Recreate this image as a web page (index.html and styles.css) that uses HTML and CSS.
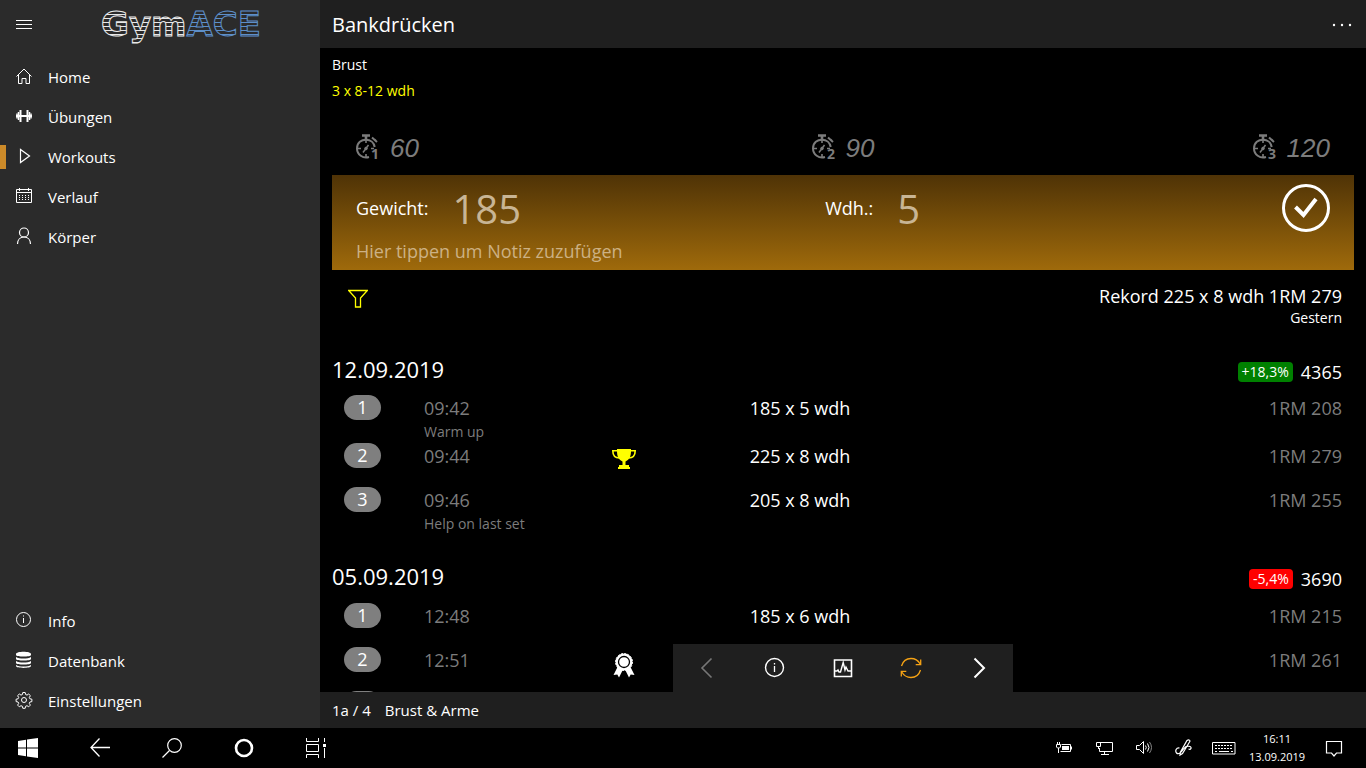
FILE: index.html
```html
<!DOCTYPE html>
<html lang="de">
<head>
    <meta charset="UTF-8">
    <meta name="viewport" content="width=device-width, initial-scale=1.0">
    <title>GymACE</title>
    <link rel="stylesheet" href="styles.css">
</head>
<body>
<div class="app">
    <aside class="sidebar">
        <div class="sidebar-head">
            <button class="icon-btn" aria-label="Menü">
                <svg width="24" height="24"><path d="M4 8.500h16M4 12.500h16M4 16.500h16" stroke="#fff"/></svg>
            </button>
            <svg class="logo" width="180" height="48" role="img" aria-label="GymACE">
                <defs>
                    <pattern id="bars-white" width="4" height="4" patternUnits="userSpaceOnUse"><path d="M0 2.500h4" stroke="#e8e8e8"/></pattern>
                    <pattern id="bars-blue" width="4" height="4" patternUnits="userSpaceOnUse"><path d="M0 2.500h4" stroke="#5d8fc9"/></pattern>
                </defs>
                <text x="1" y="36"><tspan fill="url(#bars-white)" stroke="#e8e8e8">Gym</tspan><tspan fill="url(#bars-blue)" stroke="#5d8fc9">ACE</tspan></text>
            </svg>
        </div>
        <nav class="menu">
            <a href="#" class="menu-item">
                <svg class="line" width="24" height="24"><path d="M4.500 11.500 12 4l7.500 7.500M6.500 10v8.500h3.500v-5h4v5h3.500V10"/></svg>
                Home
            </a>
            <a href="#" class="menu-item">
                <svg width="24" height="24" fill="none" stroke="#fff"><path d="M4 11h16" stroke-width="2"/><path d="M8.500 5v12M15.500 5v12" stroke-width="2"/><path d="M6.500 7v8M17.500 7v8" stroke-width="1.500"/><path d="M5 8.500v5M19 8.500v5" stroke-width="1.500"/></svg>
                Übungen
            </a>
            <a href="#" class="menu-item active">
                <svg class="line" width="24" height="24"><path d="M8.500 4.500v13l9-6.500z" stroke-width="1.200"/></svg>
                Workouts
            </a>
            <a href="#" class="menu-item">
                <svg class="line" width="24" height="24"><path d="M4.500 4.500h15v13h-15zM4.500 7.500h15M7.500 3v3M16.500 3v3"/><path d="M7 10.500h11M7 12.500h11M7 14.500h11" stroke-dasharray="1 2"/></svg>
                Verlauf
            </a>
            <a href="#" class="menu-item">
                <svg class="line" width="24" height="24"><circle cx="12" cy="7.500" r="4.500" stroke-width="1.200"/><path d="M5.500 19c0-4.500 3-7 6.500-7s6.500 2.500 6.500 7" stroke-width="1.200"/></svg>
                Körper
            </a>
        </nav>
        <nav class="menu menu-bottom">
            <a href="#" class="menu-item">
                <svg class="line" width="24" height="24"><circle cx="11.500" cy="10.500" r="7"/><path d="M11.500 9v5M11.500 6.500v1"/></svg>
                Info
            </a>
            <a href="#" class="menu-item">
                <svg width="24" height="24"><path d="M4 5c0-3 15-3 15 0v1c0 2-15 2-15 0zM4 8c3 2 12 2 15 0v2c0 2-15 2-15 0zM4 12c3 2 12 2 15 0v2c0 2-15 2-15 0zM4 16c3 2 12 2 15 0v1c0 2.500-15 2.500-15 0z" fill="#fff"/></svg>
                Datenbank
            </a>
            <a href="#" class="menu-item">
                <svg class="line" width="24" height="24"><circle cx="12" cy="11" r="2.500"/><path d="M10.800 3.500h2.400l.4 2 1.400.6 1.700-1.100 1.700 1.700-1.100 1.700.6 1.400 2 .4v2.400l-2 .4-.6 1.400 1.100 1.700-1.700 1.700-1.700-1.100-1.400.6-.4 2h-2.400l-.4-2-1.400-.6-1.700 1.100-1.700-1.700 1.100-1.700-.6-1.400-2-.4v-2.400l2-.4.6-1.400-1.100-1.700 1.700-1.700 1.700 1.100 1.400-.6z"/></svg>
                Einstellungen
            </a>
        </nav>
    </aside>

    <main class="main">
        <header class="topbar">
            <h1>Bankdrücken</h1>
            <button class="icon-btn" aria-label="Mehr">
                <svg width="24" height="24" fill="#fff"><circle cx="4" cy="13" r="1.200"/><circle cx="12" cy="13" r="1.200"/><circle cx="20" cy="13" r="1.200"/></svg>
            </button>
        </header>

        <div class="content">
            <p class="muscle">Brust</p>
            <p class="target">3 x 8-12 wdh</p>

            <div class="timers">
                <button class="timer">
                    <svg width="26" height="30"><use href="#watch"/><text x="15" y="26">1</text></svg>
                    60
                </button>
                <button class="timer">
                    <svg width="26" height="30"><use href="#watch"/><text x="15" y="26">2</text></svg>
                    90
                </button>
                <button class="timer">
                    <svg width="26" height="30"><use href="#watch"/><text x="15" y="26">3</text></svg>
                    120
                </button>
            </div>

            <form class="entry">
                <div class="entry-fields">
                    <div class="field">
                        <label for="weight">Gewicht:</label>
                        <input id="weight" type="text" value="185">
                    </div>
                    <div class="field">
                        <label for="reps">Wdh.:</label>
                        <input id="reps" type="text" value="5">
                    </div>
                    <button type="button" class="save" aria-label="Speichern">
                        <svg width="48" height="48" fill="none" stroke="#fff"><circle cx="24" cy="24" r="22.500" stroke-width="3"/><path d="M13.500 23l8 8L34 15" stroke-width="4"/></svg>
                    </button>
                </div>
                <input class="note-input" type="text" aria-label="Notiz" placeholder="Hier tippen um Notiz zuzufügen">
            </form>

            <div class="record">
                <button class="filter" aria-label="Filter">
                    <svg width="20" height="20" fill="none" stroke="#ff0" stroke-width="1.300"><path d="M.700 1.500h18.600l-6.800 7.500v9h-5V9z"/></svg>
                </button>
                <div class="record-text">
                    <p class="record-value">Rekord 225 x 8 wdh 1RM 279</p>
                    <p class="record-day">Gestern</p>
                </div>
            </div>

            <section>
                <div class="day">
                    <h2>12.09.2019</h2>
                    <span class="change up">+18,3%</span>
                    <span class="volume">4365</span>
                </div>
                <table class="sets">
                    <tr>
                        <td class="col-nr"><span class="nr">1</span></td>
                        <td class="col-time">09:42<small>Warm up</small></td>
                        <td class="col-award"></td>
                        <td class="col-reps">185 x 5 wdh</td>
                        <td class="col-rm">1RM 208</td>
                    </tr>
                    <tr>
                        <td><span class="nr">2</span></td>
                        <td class="col-time">09:44</td>
                        <td class="col-award">
                            <svg width="24" height="22" fill="#ff0"><path d="M5 1h14v2c0 6-2 9-5.500 10.500V17H17v2h1v2H6v-2h1v-2h3.500v-3.500C7 12 5 9 5 3z"/><path d="M6 2.800H.8c0 4.200 2 7.200 6.700 7.200M18 2.800h5.200c0 4.200-2 7.200-6.700 7.200" fill="none" stroke="#ff0" stroke-width="1.600"/></svg>
                        </td>
                        <td class="col-reps">225 x 8 wdh</td>
                        <td class="col-rm">1RM 279</td>
                    </tr>
                    <tr>
                        <td><span class="nr">3</span></td>
                        <td class="col-time">09:46<small>Help on last set</small></td>
                        <td></td>
                        <td class="col-reps">205 x 8 wdh</td>
                        <td class="col-rm">1RM 255</td>
                    </tr>
                </table>
            </section>

            <section>
                <div class="day">
                    <h2>05.09.2019</h2>
                    <span class="change down">-5,4%</span>
                    <span class="volume">3690</span>
                </div>
                <table class="sets">
                    <tr>
                        <td class="col-nr"><span class="nr">1</span></td>
                        <td class="col-time">12:48</td>
                        <td class="col-award"></td>
                        <td class="col-reps">185 x 6 wdh</td>
                        <td class="col-rm">1RM 215</td>
                    </tr>
                    <tr>
                        <td><span class="nr">2</span></td>
                        <td class="col-time">12:51</td>
                        <td class="col-award">
                            <svg width="22" height="26" fill="#fff"><path d="M5 14 .5 23l3.800-.5L6 25.500l4-8h2l4 8 1.700-3 3.800.5L17 14z"/><circle cx="11" cy="10" r="8.500"/><circle cx="11" cy="10" r="8.500" fill="none" stroke="#fff" stroke-dasharray="2 1.340"/><circle cx="11" cy="10" r="5.500" fill="none" stroke="#000" stroke-width="1.300"/></svg>
                        </td>
                        <td class="col-reps"></td>
                        <td class="col-rm">1RM 261</td>
                    </tr>
                    <tr>
                        <td><span class="nr"></span></td>
                        <td></td>
                        <td></td>
                        <td></td>
                        <td></td>
                    </tr>
                </table>
            </section>
        </div>

        <div class="commands">
            <button aria-label="Zurück" disabled>
                <svg width="24" height="24" fill="none" stroke="#777" stroke-width="1.600"><path d="M16.500 2.500 7 12l9.500 9.500"/></svg>
            </button>
            <button aria-label="Info">
                <svg class="line" width="24" height="24"><circle cx="11.500" cy="11.500" r="9" stroke-width="1.400"/><path d="M11.500 10v6M11.500 7v1.500" stroke-width="1.300"/></svg>
            </button>
            <button aria-label="Diagramm">
                <svg class="line" width="24" height="24"><path d="M3.500 4h17v16.500h-17z" stroke-width="1.600"/><path d="M4 15h2l1-1 1 2h1.500l2.700-9.500L14 14l1-3 2 4h3" stroke-width="1.400"/></svg>
            </button>
            <button aria-label="Wiederholen">
                <svg width="24" height="24" fill="none" stroke="#f5a214" stroke-width="1.300"><path d="M2.500 10C4 5 8 2.500 12 2.500c4 0 7.500 2.500 9.200 5.500M21.500 14c-1.500 5-5.500 7.500-9.500 7.500s-7.500-2.500-9.200-5.500M21.700 3.500v5.200h-5M2.300 20.500v-5.200h5"/></svg>
            </button>
            <button aria-label="Weiter">
                <svg width="24" height="24" fill="none" stroke="#fff" stroke-width="2"><path d="M7.500 2.500 17 12l-9.500 9.500"/></svg>
            </button>
        </div>

        <footer class="status">
            <span>1a / 4</span>
            <span>Brust &amp; Arme</span>
        </footer>
    </main>
</div>

<div class="taskbar">
    <div class="task-left">
        <button aria-label="Start"><svg width="20" height="20" fill="#fff"><path d="M0 3l8-1.200V9.500H0zM9 1.600 20 0v9.500H9zM0 10.500h8v7.700L0 17zM9 10.500h11V20L9 18.400z"/></svg></button>
        <button aria-label="Zurück"><svg class="line" width="20" height="20"><path d="M9.500.500 1 9.500l8.500 9M1 9.500h19" stroke-width="1.300"/></svg></button>
        <button aria-label="Suche"><svg class="line" width="20" height="20"><circle cx="12.500" cy="7.500" r="6.800" stroke-width="1.200"/><path d="M7.500 12.500.500 19.500" stroke-width="1.300"/></svg></button>
        <button aria-label="Cortana"><svg width="20" height="20" fill="none" stroke="#fff"><circle cx="10" cy="10" r="8" stroke-width="2.600"/></svg></button>
        <button aria-label="Aktive Anwendungen"><svg class="line" width="20" height="20"><path d="M.500 0v3.500h12V0M.500 20v-3.500h12V20M.500 6.500h12v7H.500zM18.500 0v4M18.500 10v10"/><path d="M17 6h3v3h-3z" fill="#fff" stroke="none"/></svg></button>
    </div>
    <div class="task-right">
        <button aria-label="Akku"><svg class="line" width="16" height="16"><path d="M5.500 4.500h9v7H4.500M15.500 6.500v3M2.500 8v5"/><path d="M6 6h7v4H6z" fill="#fff" stroke="none"/><path d="M1.500 2v3M3.500 2v3M.500 4.500h4V7l-1 1h-2l-1-1z"/></svg></button>
        <button aria-label="Netzwerk"><svg class="line" width="18" height="16"><path d="M5 2.500h12.500v9h-13V8M9.500 11.500v3M6 14.500h8M1.500 2.500h4v4h-4zM3.500 6.500V9"/></svg></button>
        <button aria-label="Lautsprecher"><svg class="line" width="18" height="16"><path d="M1.500 5.500h3l4-4v12l-4-4h-3zM10.500 5.500q1.500 2 0 4M12.500 3.500q3 4 0 8"/><path d="M14.500 2q4 5.500 0 11" stroke="#888"/></svg></button>
        <button aria-label="Windows Ink"><svg class="line" width="18" height="18"><path d="M12 1.500c2-1.500 3.500 0 2.500 1.500L7.500 14.500 5 16l.5-3zM4.500 9C1 8.500 0 12 1.500 14c2 2 5-1 7-4s5-3 6.500-2.500c2 .8 1 3.500-1.500 2.500" stroke-width="1.200"/></svg></button>
        <button aria-label="Tastatur"><svg class="line" width="24" height="14"><path d="M.500 1.500h22.500v11.500H.500z"/><path d="M3 4.500h18M3 7.500h18" stroke-dasharray="2 1"/><path d="M3 10.500h2M7 10.500h10M19 10.500h2"/></svg></button>
        <button class="clock"><span>16:11</span><span>13.09.2019</span></button>
        <button class="notices" aria-label="Benachrichtigungen"><svg class="line" width="18" height="18"><path d="M1.500 2.500h15v11.500h-5l-2.500 3-2.500-3h-5z" stroke-width="1.200"/></svg></button>
    </div>
</div>

<svg width="0" height="0" class="defs">
    <g id="watch" fill="none" stroke="#7c7c7c">
        <path d="M6 2.500h8M10 3v4" stroke-width="2.600"/>
        <path d="M16 4.500l5 4.500M18.500 8l1.500-1.500" stroke-width="2"/>
        <path d="M13 24C7 26 1 21.500 1 15.500S5.500 6.700 10 6.700c4.500 0 8 2.800 8.700 7.300" stroke-width="2"/>
        <path d="M10 7v3M10 24v-3M1 15.500h4M18 15.500h-3" stroke-width="1.600"/>
        <path d="M12.500 12 7 19.500" stroke-width="1.500"/>
        <circle cx="10" cy="15.500" r="1.300" fill="#7c7c7c"/>
    </g>
</svg>
</body>
</html>
```
FILE: styles.css
```css
* {
    margin: 0;
    padding: 0;
    box-sizing: border-box;
}
body {
    display: flex;
    flex-direction: column;
    height: 100vh;
    overflow: hidden;
    background: #000;
    color: #fff;
    font-family: "Open Sans", "Noto Sans", sans-serif;
    font-size: 15px;
}
button {
    background: none;
    border: none;
    color: inherit;
    font-family: inherit;
    font-size: inherit;
}
svg {
    display: block;
    flex: none;
}
.line {
    fill: none;
    stroke: #fff;
}
.defs {
    position: absolute;
}
.app {
    flex: 1;
    min-height: 0;
    display: flex;
}

/* sidebar */
.sidebar {
    width: 320px;
    background: #2b2b2b;
    display: flex;
    flex-direction: column;
    padding-bottom: 7px;
}
.sidebar-head {
    display: flex;
    align-items: center;
    height: 48px;
    padding: 0 12px;
    gap: 64px;
}
.logo {
    overflow: visible;
    font-family: "DejaVu Sans", sans-serif;
    font-weight: bold;
    font-size: 34px;
}
.menu {
    padding-top: 9px;
}
.menu-bottom {
    margin-top: auto;
}
.menu-item {
    display: flex;
    align-items: center;
    gap: 12px;
    height: 40px;
    padding-left: 12px;
    color: #fff;
    text-decoration: none;
}
.active {
    background: linear-gradient(#cc8a29, #cc8a29) no-repeat left center / 6px 24px;
}

/* main area */
.main {
    flex: 1;
    min-width: 0;
    display: flex;
    flex-direction: column;
    position: relative;
}
.topbar {
    display: flex;
    align-items: center;
    justify-content: space-between;
    height: 48px;
    padding: 0 12px;
    background: #1f1f1f;
}
.topbar h1 {
    font-size: 20px;
    font-weight: normal;
}
.content {
    flex: 1;
    min-height: 0;
    overflow: hidden;
    padding: 4px 12px 0;
}
.muscle,
.target {
    font-size: 14px;
    line-height: 26px;
}
.target {
    color: #ff0;
}
.timers {
    display: grid;
    grid-template-columns: 1fr auto 1fr;
    align-items: center;
    height: 54px;
    margin-top: 17px;
    padding: 0 24px;
}
.timer {
    display: flex;
    align-items: center;
    gap: 8px;
    color: #7c7c7c;
    font-family: "Liberation Sans Narrow", "Liberation Sans", sans-serif;
    font-style: italic;
    font-size: 26px;
    line-height: 32px;
}
.timer:last-child {
    justify-self: end;
}
.timer svg text {
    fill: #7c7c7c;
    font-family: "Open Sans", sans-serif;
    font-style: normal;
    font-weight: bold;
    font-size: 14px;
}
.entry {
    padding-top: 9px;
    padding-left: 24px;
    padding-right: 24px;
    background: linear-gradient(#4f3306, #9f6a0b);
    font-size: 18px;
}
.entry-fields {
    display: grid;
    grid-template-columns: 38fr 37fr 48px;
    align-items: center;
}
.field {
    display: flex;
    align-items: center;
    gap: 24px;
    min-width: 0;
}
.entry input {
    min-width: 0;
    background: none;
    border: none;
    outline: none;
    color: #c8b595;
    font-family: inherit;
}
.field input {
    flex: 1;
    height: 48px;
    font-size: 40px;
}
.entry .note-input {
    display: block;
    width: 100%;
    height: 38px;
    font-size: 18px;
}
.note-input::placeholder {
    color: #ccb184;
}
.record {
    display: flex;
    justify-content: space-between;
    align-items: flex-start;
    padding: 15px 12px 0 16px;
}
.filter {
    padding-top: 4px;
}
.record-text {
    text-align: right;
    line-height: 22px;
}
.record-value {
    font-size: 18px;
}
.record-day {
    font-size: 14px;
}

/* training days */
.day {
    display: flex;
    align-items: center;
    gap: 8px;
    height: 66px;
    padding: 20px 12px 0 0;
}
section + section .day {
    height: 68px;
}
.day h2 {
    flex: 1;
    padding-bottom: 6px;
    font-size: 22px;
    font-weight: normal;
}
.change {
    padding: 0 4px;
    border-radius: 4px;
    font-size: 14px;
    line-height: 20px;
}
.up {
    background: #008000;
}
.down {
    background: #f00;
}
.volume {
    font-size: 18px;
}
.sets {
    width: 100%;
    table-layout: fixed;
    border-collapse: collapse;
    font-size: 18px;
    line-height: 26px;
}
.sets tr {
    height: 44px;
}
.sets td {
    vertical-align: top;
    white-space: nowrap;
}
.col-nr {
    width: 92px;
}
.nr {
    display: block;
    width: 37px;
    height: 25px;
    margin-left: 12px;
    border-radius: 13px;
    background: #7f7f7f;
    line-height: 25px;
    text-align: center;
}
.sets .col-time {
    width: 160px;
    color: #7c7c7c;
}
.col-time small {
    display: block;
    font-size: 14px;
    line-height: 22px;
}
.col-award {
    width: 80px;
}
.col-award svg {
    margin: 5px auto 0;
}
.col-reps {
    width: 272px;
    text-align: center;
}
.sets .col-rm {
    padding-right: 12px;
    color: #7c7c7c;
    text-align: right;
}

/* floating command bar above the status line */
.commands {
    position: absolute;
    left: 50%;
    bottom: 36px;
    transform: translateX(-50%);
    display: flex;
    background: #1f1f1f;
}
.commands button {
    display: flex;
    align-items: center;
    justify-content: center;
    width: 68px;
    height: 48px;
}
.status {
    display: flex;
    align-items: center;
    gap: 14px;
    height: 36px;
    padding: 0 12px;
    background: #1f1f1f;
}

/* taskbar */
.taskbar {
    display: flex;
    justify-content: space-between;
    height: 40px;
    background: #000;
}
.task-left,
.task-right {
    display: flex;
}
.task-left {
    gap: 16px;
}
.task-right {
    padding-right: 8px;
}
.taskbar button {
    display: flex;
    align-items: center;
    justify-content: center;
    width: 40px;
}
.task-left button {
    width: 56px;
}
.taskbar .clock {
    flex-direction: column;
    width: 66px;
    font-size: 11px;
    line-height: 18px;
}
.taskbar .notices {
    width: 48px;
}
```
